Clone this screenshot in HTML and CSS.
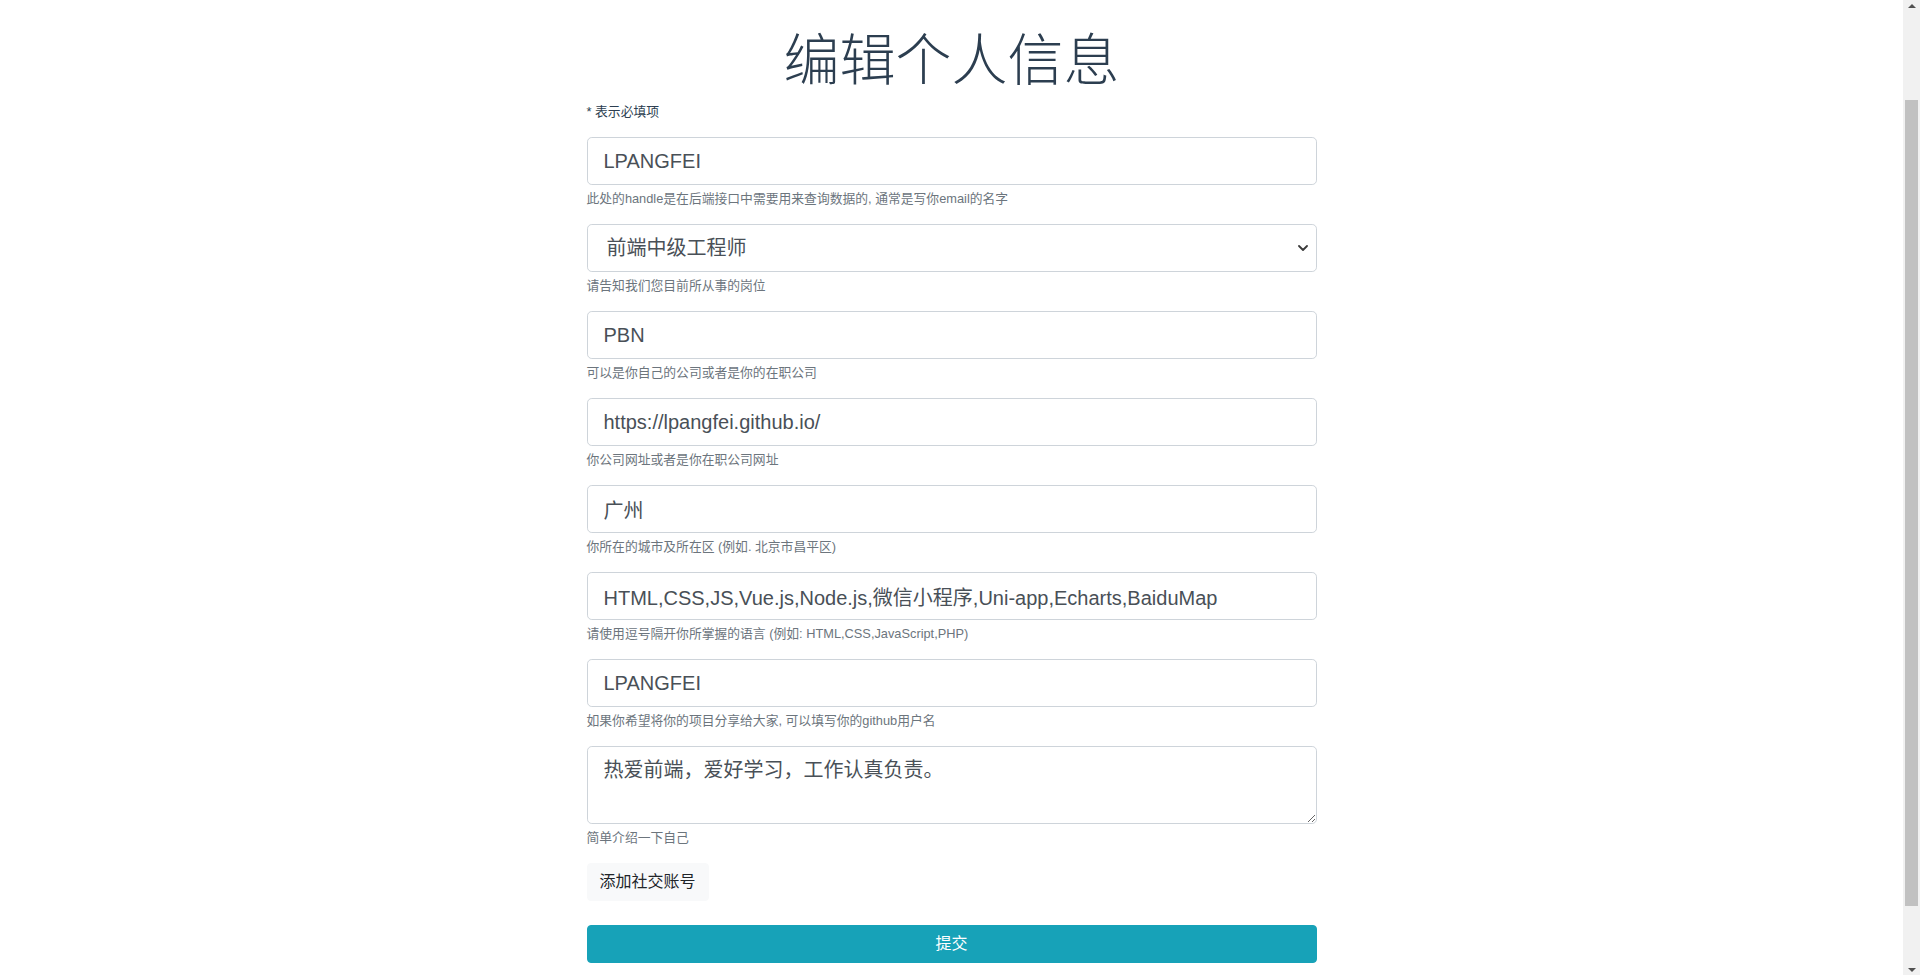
FILE: index.html
```html
<!DOCTYPE html>
<html lang="zh-CN">
<head>
<meta charset="utf-8">
<title>编辑个人信息</title>
<link rel="stylesheet" href="styles.css">
</head>
<body>
<div class="page">
  <div class="container">
    <div class="column">
      <h1 class="title">编辑个人信息</h1>
      <small class="required">* 表示必填项</small>
      <form class="form">
        <div class="group">
          <input class="control" type="text" value="LPANGFEI">
          <small class="hint">此处的handle是在后端接口中需要用来查询数据的, 通常是写你email的名字</small>
        </div>
        <div class="group">
          <div class="select-wrap">
            <select class="control select">
              <option>前端中级工程师</option>
            </select>
            <svg class="chevron" width="10" height="6" viewBox="0 0 10 6"><polyline points="1,1 5,5 9,1" fill="none" stroke="#3a3a3a" stroke-width="1.8" stroke-linecap="round" stroke-linejoin="round"/></svg>
          </div>
          <small class="hint">请告知我们您目前所从事的岗位</small>
        </div>
        <div class="group">
          <input class="control" type="text" value="PBN">
          <small class="hint">可以是你自己的公司或者是你的在职公司</small>
        </div>
        <div class="group">
          <input class="control" type="text" value="https://lpangfei.github.io/">
          <small class="hint">你公司网址或者是你在职公司网址</small>
        </div>
        <div class="group">
          <input class="control" type="text" value="广州">
          <small class="hint">你所在的城市及所在区 (例如. 北京市昌平区)</small>
        </div>
        <div class="group">
          <input class="control" type="text" value="HTML,CSS,JS,Vue.js,Node.js,微信小程序,Uni-app,Echarts,BaiduMap">
          <small class="hint">请使用逗号隔开你所掌握的语言 (例如: HTML,CSS,JavaScript,PHP)</small>
        </div>
        <div class="group">
          <input class="control" type="text" value="LPANGFEI">
          <small class="hint">如果你希望将你的项目分享给大家, 可以填写你的github用户名</small>
        </div>
        <div class="group">
          <textarea class="control area" rows="2">热爱前端，爱好学习，工作认真负责。</textarea>
          <small class="hint">简单介绍一下自己</small>
        </div>
        <div class="social">
          <button type="button" class="btn btn-light">添加社交账号</button>
        </div>
        <button type="submit" class="btn btn-info btn-block">提交</button>
      </form>
    </div>
  </div>
</div>
<div class="scrollbar" aria-hidden="true">
  <div class="sb-btn"><span class="arrow-up"></span></div>
  <div class="sb-track"><div class="sb-thumb"></div></div>
  <div class="sb-btn"><span class="arrow-down"></span></div>
</div>
<script src="scroll.js"></script>
</body>
</html>
```

FILE: styles.css
```css
* {
  box-sizing: border-box;
}

body {
  margin: 0;
  font-family: "Liberation Sans", Arial, "Noto Sans CJK SC", sans-serif;
  font-size: 16px;
  line-height: 1.5;
  color: #2c3e50;
  background: #fff;
}

.page {
  margin-right: 17px;
  padding: 127px 0 73px;
}

.container {
  width: 1140px;
  margin: 0 auto;
  padding: 0 15px;
}

.column {
  width: 730px;
  margin: 0 auto;
}

.title {
  margin: 0 0 8px;
  font-size: 56px;
  font-weight: 300;
  line-height: 1.2;
  text-align: center;
  color: #2c3e50;
}

.required {
  display: block;
  font-size: 12.8px;
  line-height: 19.2px;
  padding-bottom: 16px;
  color: #2c3e50;
}

.form {
  margin: 0;
}

.group {
  margin-bottom: 15.75px;
}

.control {
  display: block;
  width: 100%;
  height: 48px;
  padding: 8px 16px;
  font-family: inherit;
  font-size: 20px;
  line-height: 1.5;
  color: #495057;
  background: #fff;
  border: 1px solid #ced4da;
  border-radius: 4.8px;
  margin: 0;
}

.select-wrap {
  position: relative;
}

.select {
  appearance: none;
  -webkit-appearance: none;
  padding-left: 19px;
}

.chevron {
  position: absolute;
  right: 9px;
  top: 21px;
  pointer-events: none;
}

.area {
  height: 78px;
  resize: vertical;
}

.hint {
  display: block;
  margin-top: 4px;
  font-size: 12.8px;
  line-height: 19.2px;
  color: #6c757d;
}

.social {
  display: flex;
}

.btn {
  display: inline-block;
  height: 38px;
  padding: 6px 12px;
  font-family: inherit;
  font-size: 16px;
  font-weight: 400;
  line-height: 24px;
  border: 1px solid transparent;
  border-radius: 4px;
  cursor: pointer;
}

.btn-light {
  background: #f8f9fa;
  border-color: #f8f9fa;
  color: #212529;
}

.btn-info {
  background: #17a2b8;
  border-color: #17a2b8;
  color: #fff;
}

.btn-block {
  display: block;
  width: 100%;
  margin-top: 24px;
}

/* imitation of the window's classic scrollbar */
.scrollbar {
  position: fixed;
  top: 0;
  right: 0;
  width: 17px;
  height: 100vh;
  background: #f1f1f1;
  display: flex;
  flex-direction: column;
}

.sb-btn {
  height: 17px;
  display: flex;
  align-items: center;
  justify-content: center;
}

.arrow-up,
.arrow-down {
  width: 0;
  height: 0;
  border-left: 4px solid transparent;
  border-right: 4px solid transparent;
}

.arrow-up {
  border-bottom: 4px solid #505050;
  margin-top: -6px;
}

.arrow-down {
  border-top: 4px solid #505050;
  margin-top: 6px;
}

.sb-track {
  flex: 1;
  padding: 0 2px;
}

.sb-thumb {
  margin-top: 83px;
  height: 806px;
  background: #c1c1c1;
}
```

FILE: scroll.js
```js
window.scrollTo(0, 100);
window.addEventListener('load', function () {
  window.scrollTo(0, 100);
});
```
